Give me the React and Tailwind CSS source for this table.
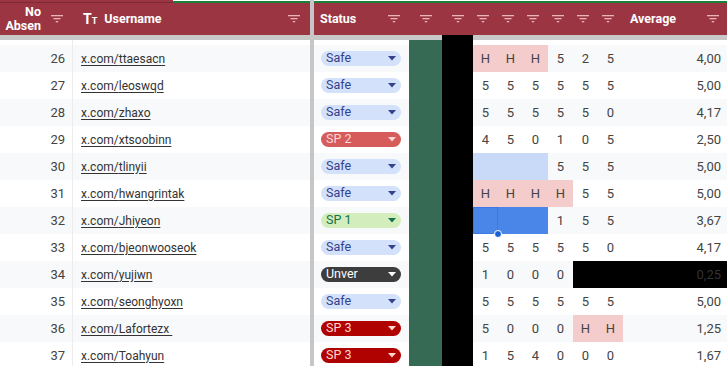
import React from 'react';

const GRID = 'grid grid-cols-[73px_237px_4px_95px_33px_31px_repeat(6,25px)_1fr]';

const STATUS = {
  'Safe': 'bg-[#d3e1fb] text-[#34428a]',
  'SP 1': 'bg-[#d4edbc] text-[#11734b]',
  'SP 2': 'bg-[#d65c5c] text-[#fcd7d7]',
  'SP 3': 'bg-[#b10202] text-[#ffd6d0]',
  'Unver': 'bg-[#3d3d3d] text-white',
};

const CELL_BG = {
  pink: 'bg-[#f4cccc]',
  lblue: 'bg-[#c9daf8]',
  blue: 'bg-[#4a86e8]',
  black: 'bg-black',
};

const rows = [
  { n: 26, u: 'ttaesacn', s: 'Safe', c: ['H', 'H', 'H', '5', '2', '5'], bg: ['pink', 'pink', 'pink'], avg: '4,00' },
  { n: 27, u: 'leoswqd', s: 'Safe', c: ['5', '5', '5', '5', '5', '5'], avg: '5,00' },
  { n: 28, u: 'zhaxo', s: 'Safe', c: ['5', '5', '5', '5', '5', '0'], avg: '4,17' },
  { n: 29, u: 'xtsoobinn', s: 'SP 2', c: ['4', '5', '0', '1', '0', '5'], avg: '2,50' },
  { n: 30, u: 'tlinyii', s: 'Safe', c: ['', '', '', '5', '5', '5'], bg: ['lblue', 'lblue', 'lblue'], avg: '5,00' },
  { n: 31, u: 'hwangrintak', s: 'Safe', c: ['H', 'H', 'H', 'H', '5', '5'], bg: ['pink', 'pink', 'pink', 'pink'], avg: '5,00' },
  { n: 32, u: 'Jhiyeon', s: 'SP 1', c: ['', '', '', '1', '5', '5'], bg: ['blue', 'blue', 'blue'], sel: true, avg: '3,67' },
  { n: 33, u: 'bjeonwooseok', s: 'Safe', c: ['5', '5', '5', '5', '5', '0'], avg: '4,17' },
  { n: 34, u: 'yujiwn', s: 'Unver', c: ['1', '0', '0', '0', '', ''], bg: [null, null, null, null, 'black', 'black'], avgBlack: true, avg: '0,25' },
  { n: 35, u: 'seonghyoxn', s: 'Safe', c: ['5', '5', '5', '5', '5', '5'], avg: '5,00' },
  { n: 36, u: 'Lafortezx\u00a0', s: 'SP 3', c: ['5', '0', '0', '0', 'H', 'H'], bg: [null, null, null, null, 'pink', 'pink'], avg: '1,25' },
  { n: 37, u: 'Toahyun', s: 'SP 3', c: ['1', '5', '4', '0', '0', '0'], avg: '1,67' },
];

const FilterIcon = ({ className = '' }) => (
  <svg width="12" height="8" viewBox="0 0 12 8" className={className}>
    <rect x="0" y="0" width="12" height="1.3" fill="#e9b3ba" />
    <rect x="2.5" y="3" width="7" height="1.3" fill="#e9b3ba" />
    <rect x="4.8" y="6" width="2.4" height="1.3" fill="#e9b3ba" />
  </svg>
);

const Chip = ({ status }) => (
  <div className={`w-[80px] h-[15px] rounded-full flex items-center justify-between pl-[5px] pr-[5px] text-[12.5px] leading-none ${STATUS[status]}`}>
    <span>{status}</span>
    <svg width="8" height="5" viewBox="0 0 8 5"><path d="M0 0h8L4 4.5z" fill="currentColor" /></svg>
  </div>
);

const Row = ({ r, i }) => {
  const rowBg = i % 2 === 0 ? 'bg-[#f8f9fa]' : 'bg-white';
  return (
    <div className={`${GRID} h-[27px] ${rowBg} text-[13px] text-[#444]`}>
      <div className="flex items-center justify-end pr-[7px] border-r border-[#ececec]">{r.n}</div>
      <div className="flex items-center pl-[8px]">
        <span className="underline underline-offset-[2px] text-[12px] text-[#333]">x.com/{r.u}</span>
      </div>
      <div className="bg-[#c6c6c6]" />
      <div className="flex items-center pl-[7px]">
        <Chip status={r.s} />
      </div>
      <div className="bg-[#366a55]" />
      <div className="bg-black" />
      {r.c.map((v, j) => {
        const bg = r.bg && r.bg[j] ? CELL_BG[r.bg[j]] : '';
        return (
          <div key={j} className={`relative flex items-center justify-center ${bg}`}>
            {v}
            {r.sel && j === 0 && (
              <>
                <div className="absolute inset-0 border border-[#3b78e7]" />
                <div className="absolute -right-[4px] -bottom-[4px] w-[8px] h-[8px] rounded-full bg-[#1a5fd6] border border-white z-10" />
              </>
            )}
          </div>
        );
      })}
      <div className={`flex items-center justify-end pr-[6px] ${r.avgBlack ? 'bg-black text-[#333]' : ''}`}>{r.avg}</div>
    </div>
  );
};

export default function App() {
  return (
    <div className="w-[727px] h-[366px] overflow-hidden bg-white" style={{ fontFamily: 'Roboto, "Liberation Sans", sans-serif' }}>
      {/* top strip */}
      <div className="flex h-[3px]">
        <div className="w-[173px] bg-[#9c3542] border-b border-[#7e2a35]" />
        <div className="w-[137px] bg-white border-b-2 border-[#188038]" />
        <div className="w-[4px] bg-[#c6c6c6]" />
        <div className="flex-1 bg-white border-b-2 border-[#188038]" />
      </div>

      {/* header */}
      <div className={`${GRID} h-[32px] bg-[#9c3542] text-white font-bold text-[12.5px]`}>
        <div className="flex items-center justify-end gap-[10px] pr-[10px]">
          <div className="text-right leading-[14px]">No<br />Absen</div>
          <FilterIcon />
        </div>
        <div className="flex items-center pl-[10px] pr-[10px]">
          <span className="text-[14px] leading-none">T<span className="text-[9px]">T</span></span>
          <span className="ml-[7px]">Username</span>
          <FilterIcon className="ml-auto" />
        </div>
        <div className="bg-[#c6c6c6]" />
        <div className="flex items-center pl-[6px] pr-[9px]">
          <span>Status</span>
          <FilterIcon className="ml-auto" />
        </div>
        <div className="flex items-center justify-center"><FilterIcon /></div>
        <div className="flex items-center justify-center"><FilterIcon /></div>
        {[0, 1, 2, 3, 4, 5].map((k) => (
          <div key={k} className="flex items-center justify-center pr-[6px]"><FilterIcon /></div>
        ))}
        <div className="flex items-center pl-[7px] pr-[8px]">
          <span>Average</span>
          <FilterIcon className="ml-auto" />
        </div>
      </div>

      {/* frozen separator band */}
      <div className={`${GRID} h-[5px] bg-[#c8c8c8]`}>
        <div /><div /><div /><div /><div />
        <div className="bg-black" />
      </div>

      {/* partial previous row */}
      <div className={`${GRID} h-[5px] bg-white`}>
        <div className="border-r border-[#ececec]" /><div />
        <div className="bg-[#c6c6c6]" />
        <div />
        <div className="bg-[#366a55]" />
        <div className="bg-black" />
      </div>

      {rows.map((r, i) => <Row key={r.n} r={r} i={i} />)}
    </div>
  );
}
